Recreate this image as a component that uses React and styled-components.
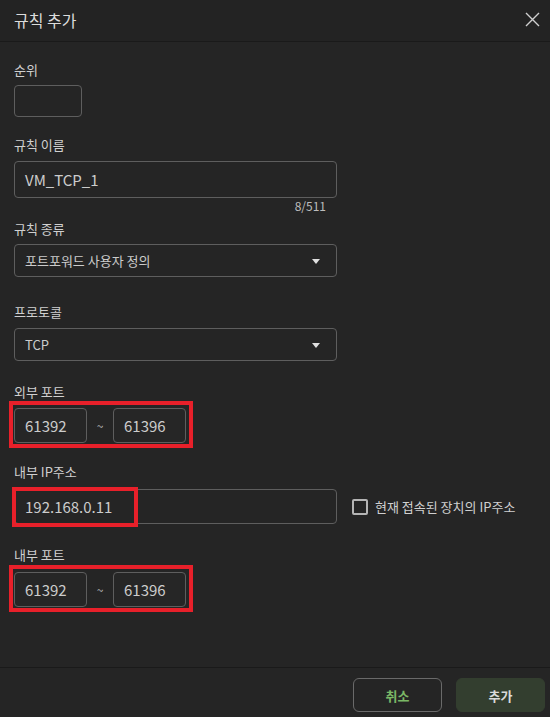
import React from "react";
import styled, { createGlobalStyle } from "styled-components";

const GlobalStyle = createGlobalStyle`
  html, body {
    margin: 0;
    padding: 0;
    background: #252525;
  }
  * { box-sizing: border-box; }
  body {
    font-family: "Noto Sans CJK KR", "Noto Sans", sans-serif;
    color: #d2d2d2;
  }
`;

const Dialog = styled.div`
  width: 550px;
  height: 717px;
  display: flex;
  flex-direction: column;
  background: #252525;
  overflow: hidden;
`;

const Header = styled.div`
  height: 42px;
  flex: none;
  display: flex;
  align-items: center;
  justify-content: space-between;
  padding: 0 7px 2px 14px;
  background: #232323;
  border-bottom: 1px solid #1a1a1a;
`;

const Title = styled.h1`
  margin: 0;
  font-size: 16px;
  font-weight: 400;
  color: #dcdcdc;
`;

const CloseButton = styled.button`
  width: 22px;
  height: 22px;
  padding: 0;
  border: none;
  background: none;
  display: flex;
  align-items: center;
  justify-content: center;
  color: #cfcfcf;
`;

const Body = styled.div`
  flex: 1;
  padding: 19px 14px 0 14px;
  display: flex;
  flex-direction: column;
`;

const Field = styled.div`
  display: flex;
  flex-direction: column;
  margin-top: ${(p) => p.$top || 0}px;
`;

const Label = styled.label`
  font-size: 13px;
  line-height: 18px;
  color: #d0d0d0;
  margin-bottom: ${(p) => p.$gap || 7}px;
`;

const TextBox = styled.div`
  position: relative;
  width: ${(p) => p.$width}px;
  height: ${(p) => p.$height}px;
  border: 1.5px solid #5e5e5e;
  border-radius: 4px;
  background: #252525;
  display: flex;
  align-items: center;
  padding-left: 10px;
  font-size: ${(p) => p.$size || 15}px;
  color: #cccccc;
`;

const Counter = styled.div`
  width: 323px;
  text-align: right;
  padding-right: 11px;
  font-size: 12px;
  line-height: 16px;
  color: #bdbdbd;
`;

const Arrow = styled.span`
  position: absolute;
  right: 16px;
  top: 50%;
  margin-top: -2px;
  width: 0;
  height: 0;
  border-left: 4.5px solid transparent;
  border-right: 4.5px solid transparent;
  border-top: 5px solid #e0e0e0;
`;

const Highlight = styled.div`
  position: relative;
  &::after {
    content: "";
    position: absolute;
    top: ${(p) => p.$inset[0]}px;
    right: ${(p) => p.$inset[1]}px;
    bottom: ${(p) => p.$inset[2]}px;
    left: ${(p) => p.$inset[3]}px;
    border: 4px solid #e8202a;
    pointer-events: none;
  }
`;

const PortRow = styled(Highlight)`
  display: flex;
  align-items: center;
  width: 172px;
`;

const PortInput = styled.div`
  width: 73px;
  height: 35px;
  border: 1.5px solid #5e5e5e;
  border-radius: 4px;
  background: #262626;
  display: flex;
  align-items: center;
  padding-left: 10px;
  font-size: 15px;
  color: #cccccc;
`;

const Tilde = styled.span`
  width: 26px;
  text-align: center;
  font-size: 12px;
  color: #b5b5b5;
`;

const IpRow = styled.div`
  display: flex;
  align-items: center;
`;

const IpMark = styled(Highlight)`
  position: absolute;
  left: -3px;
  top: -3px;
  width: 126px;
  height: 40px;
`;

const CheckLabel = styled.label`
  display: flex;
  align-items: center;
  gap: 7px;
  margin-left: 15px;
  font-size: 13px;
  color: #d0d0d0;
`;

const CheckBox = styled.span`
  width: 16px;
  height: 16px;
  border: 2px solid #b5b5b5;
  border-radius: 2px;
`;

const Footer = styled.div`
  flex: none;
  height: 50px;
  border-top: 1px solid #1a1a1a;
  display: flex;
  justify-content: flex-end;
  align-items: flex-start;
  gap: 14px;
  padding: 10px 5px 0 0;
`;

const Button = styled.button`
  width: 89px;
  height: 34px;
  border-radius: 6px;
  font-family: inherit;
  font-size: 13px;
  font-weight: 700;
  border: 1.5px solid ${(p) => (p.$primary ? "#333e2f" : "#6a6a6a")};
  background: ${(p) => (p.$primary ? "#333e2f" : "transparent")};
  color: ${(p) => (p.$primary ? "#dadada" : "#7bb866")};
`;

const Ports = ({ from, to }) => (
  <PortRow $inset={[-7, -7, -5, -5]}>
    <PortInput>{from}</PortInput>
    <Tilde>~</Tilde>
    <PortInput>{to}</PortInput>
  </PortRow>
);

export default function App() {
  return (
    <>
      <GlobalStyle />
      <Dialog>
        <Header>
          <Title>규칙 추가</Title>
          <CloseButton aria-label="닫기">
            <svg width="15" height="15" viewBox="0 0 15 15">
              <path d="M1 1L14 14M14 1L1 14" stroke="currentColor" strokeWidth="1.4" />
            </svg>
          </CloseButton>
        </Header>

        <Body>
          <Field>
            <Label $gap={6}>순위</Label>
            <TextBox $width={68} $height={32} />
          </Field>

          <Field $top={19}>
            <Label>규칙 이름</Label>
            <TextBox $width={323} $height={37}>VM_TCP_1</TextBox>
            <Counter>8/511</Counter>
          </Field>

          <Field $top={6}>
            <Label $gap={6}>규칙 종류</Label>
            <TextBox $width={323} $height={33} $size={13}>
              포트포워드 사용자 정의
              <Arrow />
            </TextBox>
          </Field>

          <Field $top={26}>
            <Label>프로토콜</Label>
            <TextBox $width={323} $height={33} $size={13}>
              TCP
              <Arrow />
            </TextBox>
          </Field>

          <Field $top={22}>
            <Label>외부 포트</Label>
            <Ports from="61392" to="61396" />
          </Field>

          <Field $top={20}>
            <Label $gap={8}>내부 IP주소</Label>
            <IpRow>
              <TextBox $width={323} $height={35}>
                <IpMark $inset={[0, 0, 0, 0]} />
                192.168.0.11
              </TextBox>
              <CheckLabel>
                <CheckBox />
                현재 접속된 장치의 IP주소
              </CheckLabel>
            </IpRow>
          </Field>

          <Field $top={22}>
            <Label $gap={8}>내부 포트</Label>
            <Ports from="61392" to="61396" />
          </Field>
        </Body>

        <Footer>
          <Button>취소</Button>
          <Button $primary>추가</Button>
        </Footer>
      </Dialog>
    </>
  );
}
